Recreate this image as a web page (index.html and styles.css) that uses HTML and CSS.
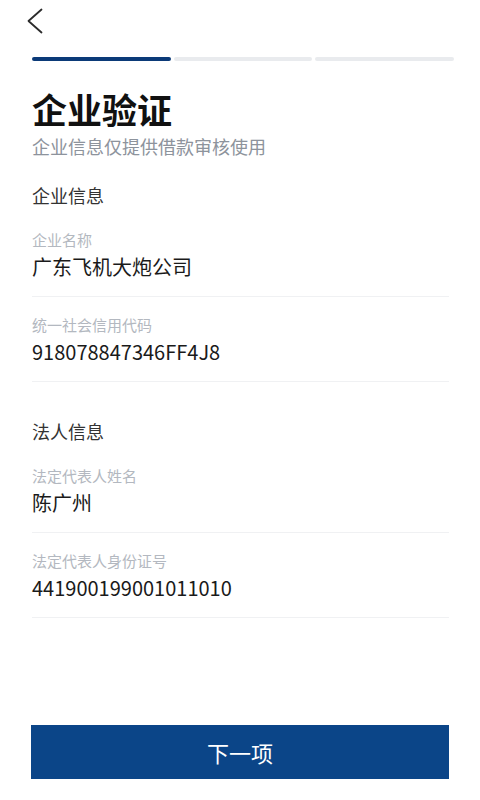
FILE: index.html
```html
<!DOCTYPE html>
<html lang="zh-CN">
<head>
<meta charset="utf-8">
<title>企业验证</title>
<link rel="stylesheet" href="styles.css">
</head>
<body>
<div class="page">
  <header class="topbar">
    <svg class="back" width="16" height="26" viewBox="0 0 16 26" aria-label="返回">
      <polyline points="14.5,1.5 1.5,13 14.5,24.5" fill="none" stroke="#2b2b2b" stroke-width="1.8" stroke-linecap="round" stroke-linejoin="round"/>
    </svg>
  </header>
  <main class="content">
    <div class="progress">
      <span class="seg active"></span>
      <span class="seg"></span>
      <span class="seg"></span>
    </div>
    <h1 class="title">企业验证</h1>
    <p class="subtitle">企业信息仅提供借款审核使用</p>

    <h2 class="section">企业信息</h2>
    <div class="field">
      <div class="label">企业名称</div>
      <div class="value">广东飞机大炮公司</div>
    </div>
    <div class="field">
      <div class="label">统一社会信用代码</div>
      <div class="value">918078847346FF4J8</div>
    </div>

    <h2 class="section section-2">法人信息</h2>
    <div class="field">
      <div class="label">法定代表人姓名</div>
      <div class="value">陈广州</div>
    </div>
    <div class="field">
      <div class="label">法定代表人身份证号</div>
      <div class="value">441900199001011010</div>
    </div>
  </main>
  <footer class="footer">
    <button class="next" type="button">下一项</button>
  </footer>
</div>
</body>
</html>
```

FILE: styles.css
```css
* { box-sizing: border-box; }
html, body {
  margin: 0;
  padding: 0;
  background: #ffffff;
}
body {
  font-family: "Noto Sans CJK SC", "Noto Sans", sans-serif;
  color: #1a1a1a;
}
.page {
  display: flex;
  flex-direction: column;
  height: 800px;
}
.topbar {
  height: 57px;
  padding: 8px 0 0 27px;
}
.back {
  display: block;
}
.content {
  padding: 0 31px 0 32px;
}
.progress {
  display: flex;
  gap: 3px;
  width: 422px;
  height: 4px;
}
.seg {
  flex: 1;
  height: 4px;
  border-radius: 2px;
  background: #e9ebee;
}
.seg.active {
  background: #0b3a78;
}
.title {
  margin: 30px 0 0;
  font-size: 35px;
  line-height: 35px;
  font-weight: 700;
  color: #111111;
}
.subtitle {
  margin: 11px 0 0;
  font-size: 18px;
  line-height: 18px;
  color: #8d939c;
}
.section {
  margin: 31px 0 0;
  font-size: 18px;
  line-height: 18px;
  font-weight: 400;
  color: #333333;
}
.section-2 {
  margin-top: 40px;
}
.field {
  margin-top: 20px;
  padding-bottom: 19px;
  border-bottom: 1px solid #f0f1f3;
}
.section + .field {
  margin-top: 28px;
}
.label {
  font-size: 15px;
  line-height: 15px;
  color: #b3b8c0;
}
.value {
  margin-top: 10px;
  font-size: 20px;
  line-height: 20px;
  color: #1a1a1a;
}
.footer {
  margin-top: auto;
  padding: 0 31px 21px 31px;
}
.next {
  display: block;
  width: 418px;
  height: 54px;
  border: 0;
  border-radius: 0;
  background: #0b4588;
  color: #ffffff;
  font-family: "Noto Sans CJK SC", "Noto Sans", sans-serif;
  font-size: 22px;
  line-height: 54px;
  padding: 0;
}
```
